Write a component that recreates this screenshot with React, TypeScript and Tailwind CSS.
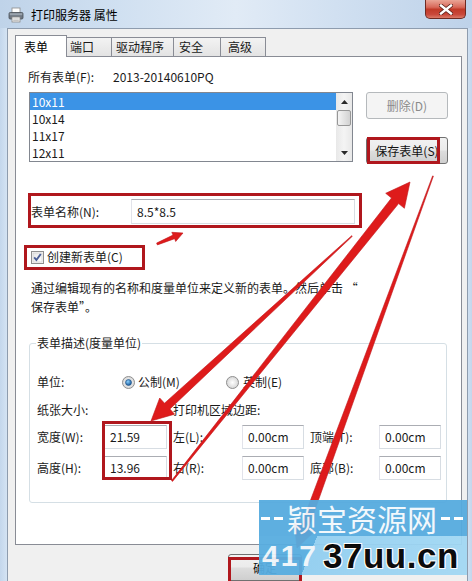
import React from "react";

type P = [number, number];
function arrowPts(t: P, p: P, w0: number, w1: number, L: number, H: number) {
  const dx = p[0] - t[0];
  const dy = p[1] - t[1];
  const len = Math.hypot(dx, dy);
  const ux = dx / len;
  const uy = dy / len;
  const nx = -uy;
  const ny = ux;
  const bx = p[0] - ux * L;
  const by = p[1] - uy * L;
  const pts: P[] = [
    [t[0] + (nx * w0) / 2, t[1] + (ny * w0) / 2],
    [bx + (nx * w1) / 2, by + (ny * w1) / 2],
    [bx + nx * H, by + ny * H],
    p,
    [bx - nx * H, by - ny * H],
    [bx - (nx * w1) / 2, by - (ny * w1) / 2],
    [t[0] - (nx * w0) / 2, t[1] - (ny * w0) / 2],
  ];
  return pts.map((q) => q[0].toFixed(1) + "," + q[1].toFixed(1)).join(" ");
}

function PrinterIcon() {
  return (
    <svg width="16" height="16" viewBox="0 0 16 16">
      <rect x="4" y="1" width="8" height="5" fill="#ffffff" stroke="#8a8a8a" strokeWidth="0.8" />
      <rect x="1" y="5.5" width="14" height="6.5" rx="1.2" fill="#6f7782" stroke="#4a5058" strokeWidth="0.8" />
      <rect x="1.8" y="6.2" width="12.4" height="2" fill="#9aa3ad" />
      <rect x="4" y="10" width="8" height="5" fill="#f4f4f4" stroke="#8a8a8a" strokeWidth="0.8" />
      <line x1="5.2" y1="12" x2="10.8" y2="12" stroke="#b0b0b0" strokeWidth="0.7" />
      <line x1="5.2" y1="13.5" x2="10.8" y2="13.5" stroke="#b0b0b0" strokeWidth="0.7" />
    </svg>
  );
}

function CloseBtn() {
  return (
    <div className="ml-auto mr-[6px] flex h-[19px] w-[41px] items-center justify-center rounded-b-[5px] border border-t-0 border-[#6e2a22] bg-[linear-gradient(180deg,#eaa596_0%,#d8695a_40%,#c13a28_52%,#c9483a_80%,#db7a68_100%)]">
      <svg width="14" height="11" viewBox="0 0 14 11">
        <path d="M2 1.5 L12 9.5 M12 1.5 L2 9.5" stroke="#5a2018" strokeWidth="4" strokeLinecap="square" />
        <path d="M2 1.5 L12 9.5 M12 1.5 L2 9.5" stroke="#ffffff" strokeWidth="2.4" strokeLinecap="square" />
      </svg>
    </div>
  );
}

function WinButton({ children, disabled, className }: { children: React.ReactNode; disabled?: boolean; className?: string }) {
  return (
    <div
      className={
        (disabled
          ? "border-[#b5b9bc] bg-[#f4f4f4] text-[#8a8a8a] "
          : "border-[#707070] bg-[linear-gradient(180deg,#f2f2f2_0%,#ebebeb_48%,#dddddd_52%,#cfcfcf_100%)] text-[#111] ") +
        "flex items-center justify-center rounded-[3px] border " +
        (className || "")
      }
    >
      {children}
    </div>
  );
}

function TextBox({ value, className }: { value: string; className?: string }) {
  return (
    <div
      className={
        "flex items-center border border-[#d7dde3] border-t-[#abadb3] border-l-[#e2e3ea] bg-white pl-[5px] " +
        (className || "")
      }
    >
      {value}
    </div>
  );
}

function Radio({ checked }: { checked?: boolean }) {
  return (
    <svg width="13" height="13" viewBox="0 0 13 13">
      <defs>
        <radialGradient id={checked ? "rg1" : "rg2"} cx="0.5" cy="0.5" r="0.5">
          <stop offset="0" stopColor="#ffffff" />
          <stop offset="1" stopColor="#d6d6d6" />
        </radialGradient>
        <radialGradient id="dot" cx="0.4" cy="0.35" r="0.6">
          <stop offset="0" stopColor="#8ad0ff" />
          <stop offset="1" stopColor="#1d5f9e" />
        </radialGradient>
      </defs>
      <circle cx="6.5" cy="6.5" r="6" fill={checked ? "url(#rg1)" : "url(#rg2)"} stroke="#8f8f8f" strokeWidth="1" />
      {checked && <circle cx="6.5" cy="6.5" r="3" fill="url(#dot)" stroke="#1f4e80" strokeWidth="0.6" />}
    </svg>
  );
}

function CheckBox() {
  return (
    <svg width="13" height="13" viewBox="0 0 13 13">
      <defs>
        <linearGradient id="cbg" x1="0" y1="0" x2="1" y2="1">
          <stop offset="0" stopColor="#e6e6e6" />
          <stop offset="1" stopColor="#ffffff" />
        </linearGradient>
      </defs>
      <rect x="0.5" y="0.5" width="12" height="12" fill="#f6f6f6" stroke="#8f8f8f" />
      <rect x="2" y="2" width="9" height="9" fill="url(#cbg)" stroke="#c8c8c8" strokeWidth="0.6" />
      <path d="M3.2 6.4 L5.4 9 L9.8 3" fill="none" stroke="#4a5f97" strokeWidth="1.9" />
    </svg>
  );
}

function RedBox({ l, t, w, h }: { l: number; t: number; w: number; h: number }) {
  return (
    <div
      className="pointer-events-none absolute border-[3px] border-[#b0171d]"
      style={{ left: l, top: t, width: w, height: h }}
    />
  );
}

export default function App() {
  const arrows = [
    arrowPts([352, 236], [151, 421], 0.8, 8, 22, 11),
    arrowPts([172, 481], [410, 182], 1.2, 9, 24, 12),
    arrowPts([433, 176], [297, 548], 0.8, 8, 22, 11),
    arrowPts([157, 244], [183, 233], 2, 4, 10, 5),
  ];

  return (
    <div className="relative h-[581px] w-[472px] overflow-hidden bg-[#f0f0f0] font-['Noto_Sans_CJK_SC','Noto_Sans',sans-serif] text-[12px] leading-[16px] text-[#1a1a1a]">
      {/* title bar */}
      <div className="flex h-[28px] items-start bg-[linear-gradient(90deg,#bfd3e9_0%,#d0e0f1_25%,#e1ebf6_50%,#cedef0_75%,#bed2e9_100%)]">
        <div className="ml-[8px] mt-[7px]">
          <PrinterIcon />
        </div>
        <div className="ml-[7px] mt-[7px] text-black">打印服务器 属性</div>
        <CloseBtn />
      </div>

      {/* window body */}
      <div className="flex h-[553px]">
        <div className="w-[8px] border-r border-[#8e9cae] bg-[linear-gradient(90deg,#c4d7ec,#d4e3f3)]" />
        <div className="flex flex-1 flex-col border-t border-[#8e9cae] bg-[#f0f0f0] pl-[7px] pr-[5px]">
          {/* tabs */}
          <div className="mt-[6px] flex h-[21px] items-end">
            <div className="relative z-10 -mb-px flex h-[22px] w-[52px] items-center border border-b-0 border-[#898c95] bg-white pl-[8px] text-black">
              表单
            </div>
            <div className="flex h-[19px] w-[45px] items-center border border-b-0 border-l-0 border-[#898c95] bg-[linear-gradient(180deg,#f3f3f3,#e3e3e3)] pl-[3px]">
              端口
            </div>
            <div className="flex h-[19px] w-[62px] items-center border border-b-0 border-l-0 border-[#898c95] bg-[linear-gradient(180deg,#f3f3f3,#e3e3e3)] pl-[4px]">
              驱动程序
            </div>
            <div className="flex h-[19px] w-[47px] items-center border border-b-0 border-l-0 border-[#898c95] bg-[linear-gradient(180deg,#f3f3f3,#e3e3e3)] pl-[5px]">
              安全
            </div>
            <div className="flex h-[19px] w-[45px] items-center border border-b-0 border-l-0 border-[#898c95] bg-[linear-gradient(180deg,#f3f3f3,#e3e3e3)] pl-[7px]">
              高级
            </div>
          </div>

          {/* tab panel */}
          <div className="flex h-[492px] w-[447px] flex-col border border-[#898c95] bg-white">
            <div className="mt-[11px] flex h-[18px] items-center pl-[12px]">
              <div className="w-[85px]">所有表单(F):</div>
              <div>2013-20140610PQ</div>
            </div>

            <div className="mt-[6px] flex pl-[13px]">
              <div className="flex h-[70px] w-[324px] border border-[#828790] bg-white">
                <div className="flex w-[306px] flex-col">
                  <div className="flex h-[17px] items-center bg-[#3b93e6] pl-[2px] text-white">10x11</div>
                  <div className="flex h-[17px] items-center pl-[2px]">10x14</div>
                  <div className="flex h-[17px] items-center pl-[2px]">11x17</div>
                  <div className="flex h-[17px] items-center pl-[2px]">12x11</div>
                </div>
                <div className="flex w-[16px] flex-col bg-[linear-gradient(90deg,#e8e8e8,#f4f4f4_50%,#e8e8e8)]">
                  <div className="flex h-[17px] items-center justify-center">
                    <svg width="7" height="4" viewBox="0 0 7 4">
                      <path d="M0 4 L3.5 0 L7 4 Z" fill="#2a2a2a" />
                    </svg>
                  </div>
                  <div className="mx-[1px] h-[16px] rounded-[2px] border border-[#979797] bg-[linear-gradient(90deg,#f4f4f4,#e3e3e3_50%,#d2d2d2)]" />
                  <div className="flex-1" />
                  <div className="flex h-[17px] items-center justify-center">
                    <svg width="7" height="4" viewBox="0 0 7 4">
                      <path d="M0 0 L3.5 4 L7 0 Z" fill="#2a2a2a" />
                    </svg>
                  </div>
                </div>
              </div>
              <div className="ml-[13px] flex w-[82px] flex-col gap-[18px]">
                <WinButton disabled className="h-[27px]">
                  删除(D)
                </WinButton>
                <WinButton className="h-[27px]">保存表单(S)</WinButton>
              </div>
            </div>

            <div className="mt-[35px] flex h-[25px] items-center pl-[15px]">
              <div className="w-[100px]">表单名称(N):</div>
              <TextBox value="8.5*8.5" className="h-[25px] w-[224px]" />
            </div>

            <div className="mt-[24px] flex h-[18px] items-center gap-[3px] pl-[15px]">
              <CheckBox />
              <div>创建新表单(C)</div>
            </div>

            <div className="mt-[12px] pl-[15px] leading-[19px]">
              通过编辑现有的名称和度量单位来定义新的表单。然后单击 “
              <br />
              保存表单”。
            </div>

            <fieldset className="ml-[13px] mt-[20px] h-[167px] w-[418px] rounded-[3px] border border-[#d5dfe5]">
              <legend className="ml-[6px] px-[1px] leading-[14px]">表单描述(度量单位)</legend>
              <div className="mt-[23px] flex h-[18px] items-center pl-[7px]">
                <div className="w-[85px]">单位:</div>
                <div className="flex w-[104px] items-center gap-[3px]">
                  <Radio checked />
                  <span>公制(M)</span>
                </div>
                <div className="flex items-center gap-[4px]">
                  <Radio />
                  <span>英制(E)</span>
                </div>
              </div>
              <div className="mt-[10px] flex h-[18px] items-center pl-[7px]">
                <div className="w-[136px]">纸张大小:</div>
                <div>打印机区域边距:</div>
              </div>
              <div className="mt-[6px] flex h-[24px] items-center pl-[7px]">
                <div className="w-[67px]">宽度(W):</div>
                <TextBox value="21.59" className="h-[24px] w-[63px]" />
                <div className="ml-[6px] w-[69px]">左(L):</div>
                <TextBox value="0.00cm" className="h-[24px] w-[62px]" />
                <div className="ml-[6px] w-[69px]">顶端(T):</div>
                <TextBox value="0.00cm" className="h-[24px] w-[62px]" />
              </div>
              <div className="mt-[7px] flex h-[24px] items-center pl-[7px]">
                <div className="w-[67px]">高度(H):</div>
                <TextBox value="13.96" className="h-[24px] w-[63px] border-b-[#5a8ccf]" />
                <div className="ml-[6px] w-[69px]">右(R):</div>
                <TextBox value="0.00cm" className="h-[24px] w-[62px]" />
                <div className="ml-[6px] w-[69px]">底部(B):</div>
                <TextBox value="0.00cm" className="h-[24px] w-[62px]" />
              </div>
            </fieldset>
          </div>

          {/* bottom buttons */}
          <div className="mt-[9px] flex">
            <WinButton className="ml-[213px] h-[27px] w-[74px]">确定</WinButton>
          </div>
        </div>
        <div className="w-[5px] border-l border-[#8e9cae] bg-[linear-gradient(90deg,#d0e0f1,#c2d6ec)]" />
      </div>

      {/* red annotation boxes */}
      <RedBox l={367} t={137} w={73} h={27} />
      <RedBox l={28} t={193} w={334} h={35} />
      <RedBox l={24} t={245} w={121} h={25} />
      <RedBox l={102} t={421} w={70} h={59} />
      <RedBox l={228} t={557} w={74} h={30} />

      {/* red arrows */}
      <svg className="pointer-events-none absolute left-0 top-0" width="472" height="581" viewBox="0 0 472 581">
        {arrows.map((pts, i) => (
          <polygon key={i} points={pts} fill="#de1b1b" stroke="#c0141a" strokeWidth="0.6" strokeLinejoin="round" />
        ))}
      </svg>

      {/* watermark */}
      <div className="absolute left-[259px] top-[500px] flex h-[75px] w-[208px] flex-col opacity-95">
        <div className="flex h-[36px] items-center bg-[#56abdf]">
          <div className="ml-[2px] flex gap-[4px]">
            <div className="h-[3px] w-[9px] bg-white" />
            <div className="h-[3px] w-[9px] bg-white" />
          </div>
          <div className="ml-[4px] text-[30px] leading-[36px] text-[#f2f8fc]">颖宝资源网</div>
          <div className="ml-[4px] flex gap-[4px]">
            <div className="h-[3px] w-[9px] bg-white" />
            <div className="h-[3px] w-[9px] bg-white" />
          </div>
        </div>
        <div className="flex h-[39px] items-center bg-[linear-gradient(112deg,#58ade0_0%,#58ade0_26%,#92cff1_26%,#a3d8f4_100%)]">
          <div className="ml-[3px] w-[58px] font-['Liberation_Sans',sans-serif] text-[30px] font-bold leading-[39px] tracking-[2px] text-[#eef6fb]">
            417
          </div>
          <div className="ml-[3px] font-['Liberation_Sans',sans-serif] text-[35px] font-bold leading-[39px] tracking-[0.5px] text-black [text-shadow:1px_1px_0_#fff,-1px_-1px_0_#fff,1px_-1px_0_#fff,-1px_1px_0_#fff]">
            37uu.cn
          </div>
        </div>
      </div>
    </div>
  );
}
